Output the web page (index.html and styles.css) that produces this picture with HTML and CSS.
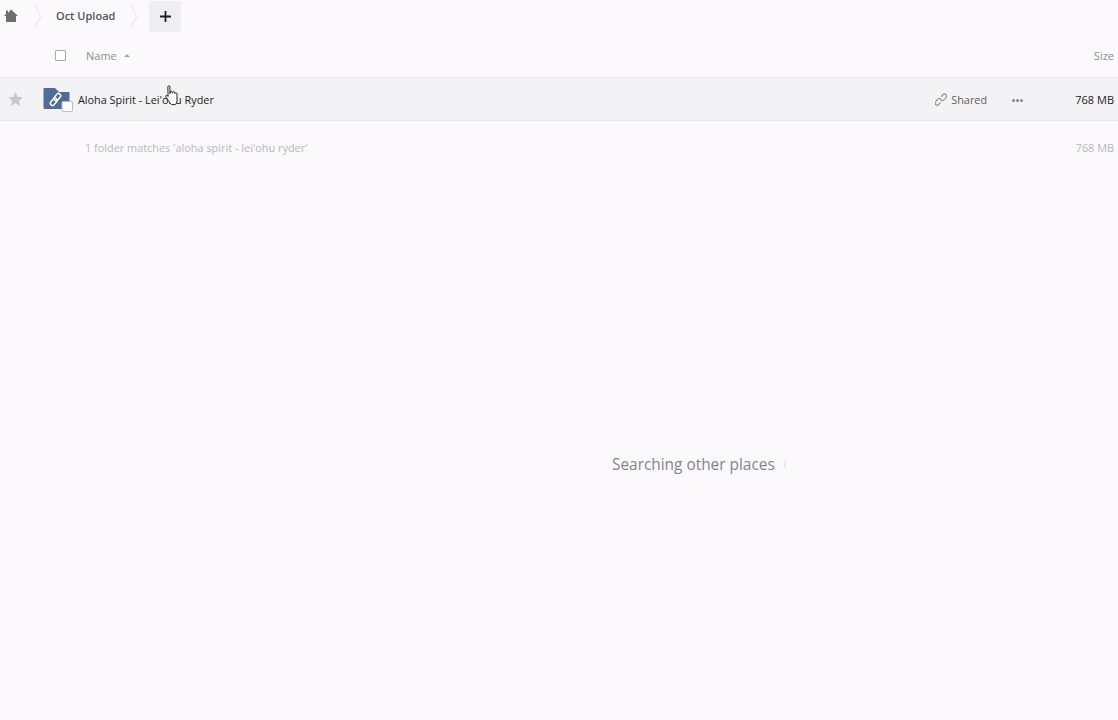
FILE: index.html
```html
<!DOCTYPE html>
<html lang="en">
<head>
<meta charset="utf-8">
<title>Oct Upload</title>
<link rel="stylesheet" href="styles.css">
</head>
<body>
<div class="page">
  <nav class="crumbs">
    <a class="crumb home">
      <svg width="14" height="13" viewBox="0 0 14 13"><path fill="#6f6d6f" d="M7 .5 14 7h-2v6H2V7H0l2-1.900V1.500h2v2.600z"/></svg>
    </a>
    <svg class="sep" width="10" height="32" viewBox="0 0 10 32"><path fill="none" stroke="#e6e5e8" d="M1 4l7 11.500L1 27"/></svg>
    <a class="crumb name">Oct Upload</a>
    <svg class="sep" width="10" height="32" viewBox="0 0 10 32"><path fill="none" stroke="#e6e5e8" d="M1 4l7 11.500L1 27"/></svg>
    <button class="add"><svg width="11" height="11" viewBox="0 0 11 11"><path fill="none" stroke="#1c1c1c" stroke-width="1.800" d="M5.500 0v11M0 5.500h11"/></svg></button>
  </nav>

  <div class="head">
    <div class="col-star"></div>
    <div class="col-check"><span class="check"></span></div>
    <div class="col-name">Name<span class="sort"></span></div>
    <div class="col-size">Size</div>
  </div>

  <div class="row">
    <div class="star">
      <svg width="15" height="14" viewBox="0 0 15 14"><path fill="#c9c8ca" d="M7.500 0l2.200 4.700 5.100.6-3.800 3.500 1 5.100-4.500-2.600L3 13.900l1-5.100L.2 5.300l5.100-.6z"/></svg>
    </div>
    <div class="folder">
      <svg width="30" height="25" viewBox="0 0 30 25">
        <path fill="#4e6d96" d="M1 1h11l4 4h9.500q1 0 1 1v16h-25q-1 0-1-1V2q0-1 1-1z"/>
        <g fill="none" stroke="#fff" stroke-width="1.500" transform="rotate(-52 12.500 12.500)">
          <rect x="5.500" y="10.300" width="8" height="4.400" rx="2.200"/>
          <rect x="11.500" y="10.300" width="8" height="4.400" rx="2.200"/>
        </g>
        <rect x="19" y="14.500" width="10.500" height="10" rx="1" fill="#fbfafc" stroke="#bdbcc0"/>
      </svg>
    </div>
    <div class="file">Aloha Spirit - Lei'ohu Ryder</div>
    <div class="shared">
      <svg width="12" height="13" viewBox="0 0 12 13"><g fill="none" stroke="#8b8a8e" stroke-width="1.100" stroke-linecap="round"><path d="M5.200 9.800l-1.500 1.700a2 2 0 0 1-3-2.800l2.200-2.500a2 2 0 0 1 3 0"/><path d="M6.500 3.400L8 1.700a2 2 0 0 1 3 2.800L8.800 7a2 2 0 0 1-3 0"/></g></svg>
      <span>Shared</span>
    </div>
    <div class="more"><i></i><i></i><i></i></div>
    <div class="size">768 MB</div>
  </div>

  <div class="summary">
    <div class="summary-text">1 folder matches 'aloha spirit - lei'ohu ryder'</div>
    <div class="summary-size">768 MB</div>
  </div>

  <div class="searching">
    <span>Searching other places</span>
    <svg width="6" height="12" viewBox="0 0 6 12"><path fill="none" stroke="#dddce0" d="M4 1.500Q1 6 4 10.500"/></svg>
  </div>

  <svg class="cursor" width="16" height="23" viewBox="0 0 14 20">
    <path fill="#fff" stroke="#222" stroke-width=".85" stroke-linejoin="round" d="M2.500 1.500c0-1.200 1.800-1.200 1.800 0v6l.3-1.500c.2-1 1.600-.9 1.700.1l.2 1 .3-.8c.3-.9 1.600-.7 1.700.2l.1 1 .4-.5c.5-.6 1.500-.2 1.500.6v5.700c0 1.900-.7 2.900-1.500 3.800H5.600c-1-1-1.900-2.400-3-4L.8 10.300c-.6-1 .5-1.900 1.300-1.100l.6.800z"/>
  </svg>
</div>
</body>
</html>
```

FILE: styles.css
```css
* { box-sizing: border-box; }
html, body { margin: 0; height: 100%; }
body {
  background: #fbf9fb;
  font-family: "Open Sans", "Liberation Sans", sans-serif;
  color: #1f1f1f;
  overflow: hidden;
}
.page { position: relative; width: 1118px; height: 720px; display: flex; flex-direction: column; }

.crumbs { display: flex; align-items: center; height: 33px; padding-left: 4px; }
.crumb { display: flex; align-items: center; }
.home { width: 29px; margin-top: -2px; }
.crumbs .sep { flex: none; }
.name { font-size: 11px; font-weight: 600; color: #55545a; padding: 0 14px 2px 14px; white-space: nowrap; margin-left: -1px; }
.add {
  width: 32px; height: 31px; margin-left: 10px; padding: 0;
  border: 0; border-radius: 2px; background: #efeef0;
  display: flex; align-items: center; justify-content: center;
}

.head {
  display: flex; align-items: center; height: 45px;
  border-bottom: 1px solid #e9e8eb;
  font-size: 11px; color: #8e8d92;
}
.col-star { width: 55px; }
.col-check { width: 31px; display: flex; margin-top: 1px; }
.check { width: 11px; height: 11px; border: 1px solid #a9a8ac; border-radius: 1px; background: #fff; }
.col-name { flex: 1; display: flex; align-items: center; }
.sort { width: 0; height: 0; margin-left: 7px; border: 3.500px solid transparent; border-top: 0; border-bottom: 3.500px solid #a5a4a8; }
.col-size { padding-right: 4px; }

.row {
  display: flex; align-items: center; height: 43px;
  background: #f3f2f4;
  border-bottom: 1px solid #e9e8eb;
  font-size: 10.850px;
}
.star { width: 43px; padding-left: 8px; display: flex; }
.folder { width: 35px; display: flex; margin-top: 1px; }
.file { flex: 1; color: #1c1c1e; white-space: nowrap; }
.shared { display: flex; align-items: center; gap: 4px; color: #5f5e63; width: 77px; }
.more { display: flex; gap: 1px; width: 74px; margin-top: 2px; }
.more i { width: 3px; height: 3px; border-radius: 50%; background: #85848a; }
.size { padding-right: 4px; color: #1c1c1e; white-space: nowrap; margin-left: -11px; font-size: 11px; }

.summary {
  display: flex; justify-content: space-between; align-items: center;
  height: 54px; padding: 0 4px 2px 85px;
  font-size: 10.900px; color: #b9b8bc;
}

.searching {
  display: flex; align-items: center; gap: 7px;
  padding: 0 0 0 612px; margin-top: 280px;
  font-size: 15.400px; color: #85848a; line-height: 20px;
}

.cursor { position: absolute; left: 165px; top: 85px; }
```
